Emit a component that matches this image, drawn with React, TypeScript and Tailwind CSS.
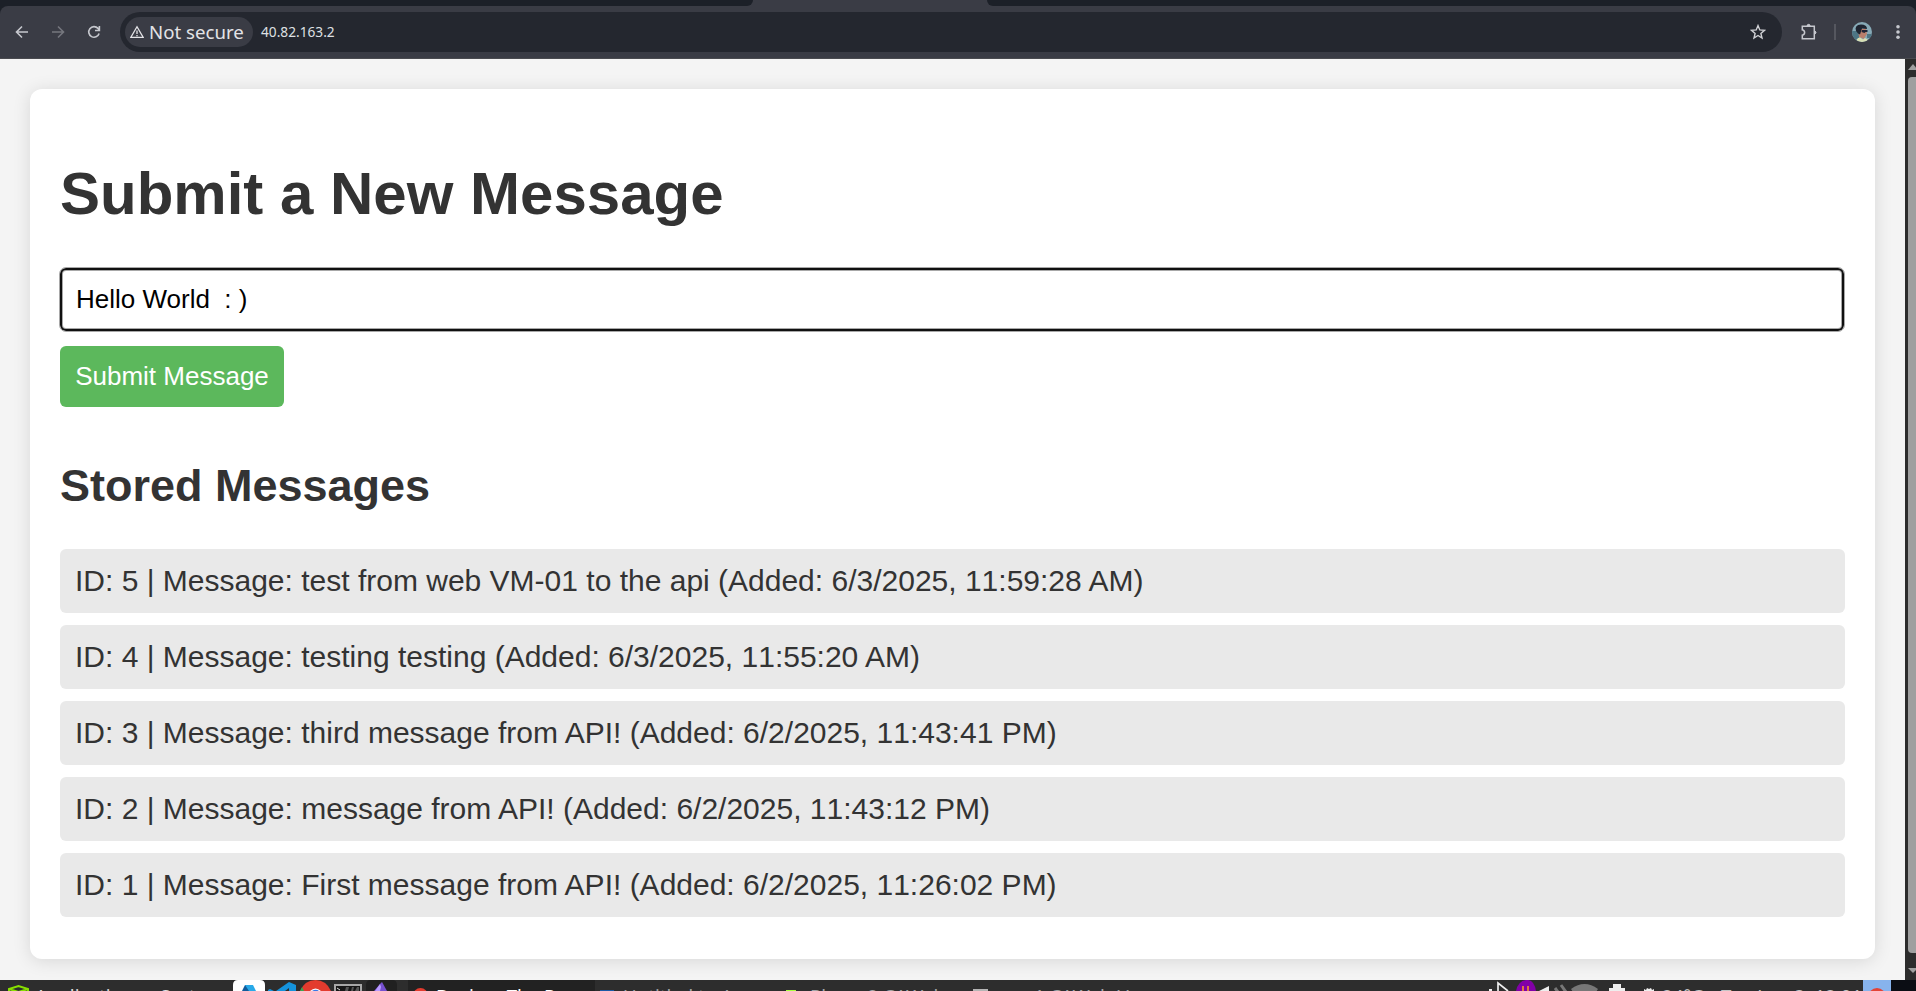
import React from "react";

const messages = [
  { text: "ID: 5 | Message: test from web VM-01 to the api (Added: 6/3/2025, ", time: "11:59:28", suffix: " AM)" },
  { text: "ID: 4 | Message: testing testing (Added: 6/3/2025, ", time: "11:55:20", suffix: " AM)" },
  { text: "ID: 3 | Message: third message from API! (Added: 6/2/2025, ", time: "11:43:41", suffix: " PM)" },
  { text: "ID: 2 | Message: message from API! (Added: 6/2/2025, ", time: "11:43:12", suffix: " PM)" },
  { text: "ID: 1 | Message: First message from API! (Added: 6/2/2025, ", time: "11:26:02", suffix: " PM)" },
];

function BrowserBar() {
  return (
    <header className="h-[59px] shrink-0 bg-[#1c2028] font-['Noto_Sans',sans-serif]">
      <div className="flex h-[6px] bg-[#3a3c45]">
        <div className="w-[753px] rounded-br-[10px] bg-[#1c2028]" />
        <div className="w-[234px] bg-[#3a3c45]" />
        <div className="flex-1 rounded-bl-[10px] bg-[#1c2028]" />
      </div>
      <div className="flex h-[53px] items-center rounded-t-[8px] border-b border-[#4a4b50] bg-[#3a3c45]">
        <svg className="ml-[14px] size-4 text-[#c6c8ce]" viewBox="0 0 16 16" fill="none" stroke="currentColor" strokeWidth="1.6"><path d="M14 8H3M8 2.5 2.5 8 8 13.5" /></svg>
        <svg className="ml-5 size-4 text-[#75777e]" viewBox="0 0 16 16" fill="none" stroke="currentColor" strokeWidth="1.6"><path d="M2 8h11M8 2.5 13.500 8 8 13.500" /></svg>
        <svg className="ml-5 size-4 text-[#c6c8ce]" viewBox="0 0 16 16" fill="none" stroke="currentColor" strokeWidth="1.6"><path d="M13.100 9.500A5.300 5.300 0 1 1 12 4.400L13.400 6M13.400 2v4.500H9" /></svg>
        <div className="ml-[18px] flex h-10 w-[1662px] items-center rounded-full bg-[#24272f] pl-[5px]">
          <div className="flex h-[30px] w-32 items-center rounded-full bg-[#3a3c45] pl-[5px] text-[#e3e3e6]">
            <svg className="size-[14px] shrink-0" viewBox="0 0 14 14" fill="none" stroke="currentColor" strokeWidth="1.3"><path d="M7 1.700.9 12.300h12.200ZM7 5.500v3.600M7 10v1.300" /></svg>
            <span className="ml-[5px] text-[18.67px] leading-[30px] whitespace-nowrap">Not secure</span>
          </div>
          <span className="ml-2 text-[13.7px] text-[#dfe0e3]">40.82.163.2</span>
          <svg className="mr-4 ml-auto size-4 text-[#d0d1d5]" viewBox="0 0 16 16" fill="none" stroke="currentColor" strokeWidth="1.4"><path d="m8 1.600 1.800 4.300 4.700.4-3.600 3.100 1.100 4.600L8 11.500 4 14l1.100-4.600L1.500 6.300l4.700-.4Z" /></svg>
        </div>
        <svg className="ml-[18px] size-[18px] text-[#c6c8ce]" viewBox="0 0 18 18" fill="none" stroke="currentColor" strokeWidth="1.500"><path d="M2.300 3.200H14.300V15.800H2.300V12.200C5.400 11.500 5.400 7.500 2.300 6.800Z" /><path d="M7 2.500a1.700 1.700 0 0 1 3.200 0ZM15 8v3q2-1.500 0-3Z" fill="currentColor" strokeWidth="1" /></svg>
        <div className="ml-4 h-4 w-[2px] bg-[#55575f]" />
        <svg className="ml-4 size-5" viewBox="0 0 20 20">
          <defs><clipPath id="face"><circle cx="10" cy="10" r="10" /></clipPath></defs>
          <g clipPath="url(#face)">
            <path fill="#86a9b6" d="M0 0h20v20H0Z" />
            <path fill="#4d7584" d="M0 9h7l1 5-3 6H0ZM15 12h5v4h-5Z" />
            <path fill="#b97f6c" d="M6 7h8l1 5-2 3-1 2-5-2Z" />
            <path fill="#1e2430" d="M4 9Q2 3 9 2.500q6 0 6 4.500l-5-.5-1 3-1 3-2-1Z" />
            <path fill="#202436" d="M10 8h5.500v2h-2l-1 1-3-1Z" />
            <path fill="#d8dfb4" d="M4 20q0-4 4-4.500l3 2 2-1.500q3 1 4 4Z" />
          </g>
        </svg>
        <svg className="ml-[18px] size-4 text-[#c6c8ce]" viewBox="0 0 16 16" fill="currentColor"><circle cx="8" cy="2.700" r="1.800" /><circle cx="8" cy="8" r="1.800" /><circle cx="8" cy="13.300" r="1.800" /></svg>
      </div>
    </header>
  );
}

function MessagePage() {
  return (
    <main className="min-w-0 flex-1 overflow-hidden bg-[#f4f4f4] p-[30px] font-['Liberation_Sans',Arial,sans-serif] text-[#333]">
      <div className="h-[870px] rounded-[12px] bg-white px-[30px] pt-[70px] shadow-[0_2px_18px_rgba(0,0,0,0.12)]">
        <h1 className="h-[69px] text-[60px] leading-[69px] font-bold">Submit a New Message</h1>
        <input readOnly value="Hello World  : )" className="mt-[39px] -ml-px block h-[65px] w-[1786px] rounded-[7px] border border-[#a8a8a8] bg-white px-4 text-[26px] text-black shadow-[inset_0_0_0_2px_#101010,inset_0_0_0_3px_#a8a8a8] outline-none" />
        <button className="mt-[14px] block h-[61px] w-[224px] rounded-[6px] bg-[#5cb85c] text-[26px] whitespace-nowrap text-white">Submit Message</button>
        <h2 className="mt-[53px] h-[52px] text-[45px] leading-[52px] font-bold">Stored Messages</h2>
        <ul className="mt-[37px] flex flex-col gap-3">
          {messages.map(({ text, time, suffix }) => (
            <li key={time} className="h-16 rounded-[6px] bg-[#e9e9e9] px-[15px] text-[30px] leading-[64px] whitespace-nowrap">
              {text}<span className="[font-kerning:none]">{time}</span>{suffix}
            </li>
          ))}
        </ul>
      </div>
    </main>
  );
}

function Scrollbar() {
  return (
    <div className="flex w-[11px] flex-col overflow-hidden bg-[#2c2c2c] pl-[3px]">
      <svg className="mt-[5px] h-[6px] w-[8px] shrink-0" viewBox="0 0 8 6"><path fill="#9f9f9f" d="M0 6 5 0l5 6Z" /></svg>
      <div className="mt-[7px] h-[876px] shrink-0 rounded-l-[4px] bg-[#9f9f9f]" />
      <svg className="mt-[15px] h-[6px] w-[8px] shrink-0" viewBox="0 0 8 6"><path fill="#9f9f9f" d="M0 0h10L5 5Z" /></svg>
    </div>
  );
}

function Taskbar() {
  return (
    <footer className="flex h-[11px] shrink-0 overflow-hidden bg-[#2d2d2d] font-['Noto_Sans',sans-serif] text-[18.67px] leading-[20px] whitespace-pre text-[#a2a5a8]">
      <svg className="ml-2 h-[11px] w-[21px] shrink-0" viewBox="0 0 21 11" fill="none" stroke="#88e000" strokeWidth="2"><path d="M1 12V9l9.500-3L20 9v3M1 9l9.500 3L20 9" /></svg>
      <div className="ml-[6px] flex w-[198px] shrink-0 pt-[6px] text-[#dedede]">
        <span className="w-[125px]">Applications</span>
        <span>System</span>
      </div>
      <svg className="h-[11px] w-[32px] shrink-0" viewBox="0 0 32 11"><path fill="#fff" d="M0 11V5q0-5 5-5h22q5 0 5 5v6Z" /><path fill="#125b9b" d="m12 5-3 6h7V5Z" /><path fill="#28a9e8" d="M12 5h8l3 6h-7Z" /></svg>
      <svg className="ml-[3px] h-[11px] w-[28px] shrink-0" viewBox="0 0 28 11"><path fill="#1593dc" d="m0 10 2-1 4 2H0ZM8 11 21 2l7 3v6h-7V8l-4 3Z" /></svg>
      <svg className="ml-1 h-[11px] w-[31px] shrink-0" viewBox="0 0 31 11"><path fill="#e33b2e" d="M0 11Q5 0 15.500 0T31 11Z" /><path fill="#35a853" d="m0 11 2-4 2 4Z" /><path fill="#fff" d="M10 11q5.500-5 11 0Z" /><path fill="#3977e8" d="M12 11q4-2.500 7 0Z" /></svg>
      <svg className="ml-[3px] h-[11px] w-[28px] shrink-0" viewBox="0 0 28 11"><path fill="#a8a8a8" d="M0 4h28v7H0Z" /><path fill="#171717" d="M2 6h24v5H2Z" /><path stroke="#ddd" fill="none" d="m3 8 3 2" /><path fill="#555" d="m11 11 1-4h3l-1 4Zm6 0 1-4h2l-1 4Zm4 0 2-4h2v4Z" /></svg>
      <svg className="ml-1 h-[11px] w-[31px] shrink-0" viewBox="0 0 31 11"><path fill="#202020" d="M0 11V5q0-5 5-5h21q5 0 5 5v6Z" /><path fill="#7650d0" d="m8 11 6-7 2-2 5 9Z" /><path fill="#b99bff" d="m9 11 5-7 1 3-1 4Z" /></svg>
      <div className="ml-[11px] flex w-[187px] shrink-0 bg-[#222] text-white">
        <svg className="ml-[5px] h-[11px] w-4 shrink-0" viewBox="0 0 16 11"><circle cx="7.500" cy="15.500" r="7.500" fill="#e43b2e" /></svg>
        <span className="ml-[7px] pt-[6px]">Design: The Po</span>
      </div>
      <div className="mt-[10px] ml-[5px] h-px w-[14px] shrink-0 bg-[#1b59a6]" />
      <span className="ml-[9px] w-[163px] shrink-0 pt-[6px]">Untitled to Arc</span>
      <div className="mt-[10px] h-px w-[10px] shrink-0 bg-[#a9ff40]" />
      <span className="ml-[14px] w-[163px] shrink-0 pt-[6px]">Phase 2 CAWeb</span>
      <div className="mt-[9px] h-[2px] w-[15px] shrink-0 bg-[#b5b5b5]" />
      <span className="ml-[13px] pt-[6px]">vm-1 CAWeb-V</span>
      <div className="ml-auto flex shrink-0">
        <svg className="h-[11px] w-[175px]" viewBox="0 0 175 11"><path stroke="#eee" strokeWidth="1.700" fill="none" d="M11 12V3l10 8" /><path fill="#eee" d="M2 11V9h3v2Z" /><path fill="#8200a8" d="M29 11Q31 1 39 0t10 11Z" /><path stroke="#ff9e20" strokeWidth="1.500" d="M36 6v5m5-5v5" /><path fill="#eee" d="m52 11 10-5v5Z" /><path stroke="#777" strokeWidth="3" fill="none" d="m68 8 3 4m3-7 5 7" /><path fill="#777" d="M84 9q13.500-10 27 0l-2 3H86Z" /><path fill="#eee" d="M122 11V8h4V4h8v4h4v3Z" /><path fill="#eee" d="m157 9 2 1 1-2 2 1 2-1 1 2 2-1v2h-10Z" /></svg>
        <div className="flex w-[201px] overflow-hidden pt-[6px] text-[#c5c5c5]">
          <span className="w-[59px] shrink-0">24°C</span>
          <span className="w-[73px] shrink-0">Tue Jun</span>
          <span>3, 12:01</span>
        </div>
        <svg className="h-[11px] w-[28px] bg-[#87b3ed]" viewBox="0 0 28 11"><circle cx="14" cy="17" r="9" fill="#e44336" /></svg>
        <div className="w-[25px] bg-[#0b0d14]" />
      </div>
    </footer>
  );
}

export default function App() {
  return (
    <div className="flex h-[991px] w-[1916px] flex-col overflow-hidden">
      <BrowserBar />
      <div className="flex h-[921px] min-h-0 shrink-0"><MessagePage /><Scrollbar /></div>
      <Taskbar />
    </div>
  );
}
